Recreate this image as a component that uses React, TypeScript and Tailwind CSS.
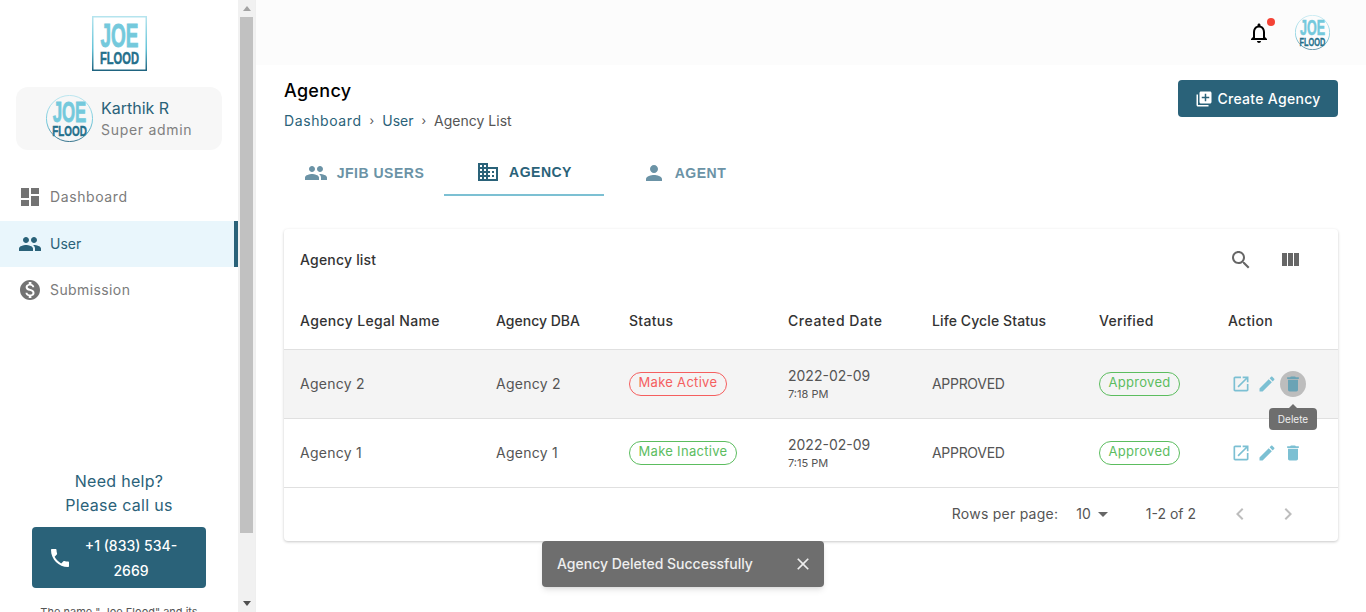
const ICONS = {
  dashboard: 'M3 13h8V3H3v10zm0 8h8v-6H3v6zm10 0h8V11h-8v10zm0-18v6h8V3h-8z',
  people:
    'M16 11c1.66 0 2.99-1.34 2.99-3S17.66 5 16 5c-1.66 0-3 1.34-3 3s1.34 3 3 3zm-8 0c1.66 0 2.99-1.34 2.99-3S9.66 5 8 5C6.34 5 5 6.34 5 8s1.34 3 3 3zm0 2c-2.33 0-7 1.17-7 3.5V19h14v-2.5c0-2.33-4.67-3.5-7-3.5zm8 0c-.29 0-.62.02-.97.05 1.16.84 1.97 1.97 1.97 3.45V19h6v-2.5c0-2.33-4.67-3.5-7-3.5z',
  money:
    'M12 2C6.48 2 2 6.48 2 12s4.48 10 10 10 10-4.48 10-10S17.52 2 12 2zm1.41 16.09V20h-2.67v-1.93c-1.71-.36-3.16-1.46-3.27-3.4h1.96c.1 1.05.82 1.87 2.65 1.87 1.96 0 2.4-.98 2.4-1.59 0-.83-.44-1.61-2.67-2.14-2.48-.6-4.18-1.62-4.18-3.67 0-1.72 1.39-2.84 3.11-3.21V4h2.67v1.95c1.86.45 2.79 1.86 2.85 3.39H14.3c-.05-1.11-.64-1.87-2.22-1.87-1.5 0-2.4.68-2.4 1.64 0 .84.65 1.39 2.67 1.91s4.18 1.39 4.18 3.91c-.01 1.83-1.38 2.83-3.12 3.16z',
  phone:
    'M6.62 10.79c1.44 2.83 3.76 5.14 6.59 6.59l2.2-2.2c.27-.27.67-.36 1.02-.24 1.12.37 2.33.57 3.57.57.55 0 1 .45 1 1V20c0 .55-.45 1-1 1-9.39 0-17-7.61-17-17 0-.55.45-1 1-1h3.5c.55 0 1 .45 1 1 0 1.25.2 2.45.57 3.57.11.35.03.74-.25 1.02l-2.2 2.2z',
  domain:
    'M12 7V3H2v18h20V7H12zM6 19H4v-2h2v2zm0-4H4v-2h2v2zm0-4H4V9h2v2zm0-4H4V5h2v2zm4 12H8v-2h2v2zm0-4H8v-2h2v2zm0-4H8V9h2v2zm0-4H8V5h2v2zm10 12h-8v-2h2v-2h-2v-2h2v-2h-2V9h8v10zm-2-8h-2v2h2v-2zm0 4h-2v2h2v-2z',
  person:
    'M12 12c2.21 0 4-1.79 4-4s-1.79-4-4-4-4 1.79-4 4 1.79 4 4 4zm0 2c-2.67 0-8 1.34-8 4v2h16v-2c0-2.66-5.33-4-8-4z',
  libraryAdd:
    'M4 6H2v14c0 1.1.9 2 2 2h14v-2H4V6zm16-4H8c-1.1 0-2 .9-2 2v12c0 1.1.9 2 2 2h12c1.1 0 2-.9 2-2V4c0-1.1-.9-2-2-2zm-1 9h-4v4h-2v-4H9V9h4V5h2v4h4v2z',
  search:
    'M15.5 14h-.79l-.28-.27C15.41 12.59 16 11.11 16 9.5 16 5.91 13.09 3 9.5 3S3 5.91 3 9.5 5.91 16 9.5 16c1.61 0 3.09-.59 4.23-1.57l.27.28v.79l5 4.99L20.49 19l-4.99-5zm-6 0C7.01 14 5 11.99 5 9.5S7.01 5 9.5 5 14 7.01 14 9.5 11.99 14 9.5 14z',
  columns: 'M10 18h5V5h-5v13zm-6 0h5V5H4v13zM16 5v13h5V5h-5z',
  open: 'M19 19H5V5h7V3H5c-1.11 0-2 .9-2 2v14c0 1.1.89 2 2 2h14c1.1 0 2-.9 2-2v-7h-2v7zM14 3v2h3.59l-9.83 9.83 1.41 1.41L19 6.41V10h2V3h-7z',
  edit: 'M3 17.25V21h3.75L17.81 9.94l-3.75-3.75L3 17.25zM20.71 7.04c.39-.39.39-1.02 0-1.41l-2.34-2.34c-.39-.39-1.02-.39-1.41 0l-1.83 1.83 3.75 3.75 1.83-1.83z',
  trash: 'M6 19c0 1.1.9 2 2 2h8c1.1 0 2-.9 2-2V7H6v12zM19 4h-3.5l-1-1h-5l-1 1H5v2h14V4z',
  close:
    'M19 6.41L17.59 5 12 10.59 6.41 5 5 6.41 10.59 12 5 17.59 6.41 19 12 13.41 17.59 19 19 17.59 13.41 12z',
  chevronLeft: 'M15.41 7.41L14 6l-6 6 6 6 1.41-1.41L10.83 12z',
  chevronRight: 'M10 6L8.59 7.41 13.17 12l-4.58 4.59L10 18l6-6z',
  dropDown: 'M7 10l5 5 5-5z',
  bell: 'M12 22c1.1 0 2-.9 2-2h-4c0 1.1.9 2 2 2zm6-6v-5c0-3.07-1.63-5.64-4.5-6.32V4c0-.83-.67-1.5-1.5-1.5s-1.5.67-1.5 1.5v.68C7.64 5.36 6 7.92 6 11v5l-2 2v1h16v-1l-2-2zm-2 1H8v-6c0-2.48 1.51-4.5 4-4.5s4 2.02 4 4.5v6z',
};

function Icon({ name, className }: { name: keyof typeof ICONS; className: string }) {
  return (
    <svg viewBox="0 0 24 24" fill="currentColor" className={`shrink-0 ${className}`}>
      <path d={ICONS[name]} />
    </svg>
  );
}

function LogoWords({ id }: { id: string }) {
  return (
    <>
      <defs>
        <linearGradient id={`${id}-joe`} x1="0" y1="0" x2="0" y2="1">
          <stop offset="0" stopColor="#a6dfeb" />
          <stop offset="1" stopColor="#5fc1d7" />
        </linearGradient>
        <linearGradient id={`${id}-flood`} x1="0" y1="0" x2="0" y2="1">
          <stop offset="0" stopColor="#2f8aa6" />
          <stop offset="1" stopColor="#1d5f7a" />
        </linearGradient>
        <linearGradient id={`${id}-edge`} x1="0" y1="0" x2="0" y2="1">
          <stop offset="0" stopColor="#b5e4ee" />
          <stop offset="0.6" stopColor="#62c3d8" />
          <stop offset="1" stopColor="#1f6480" />
        </linearGradient>
      </defs>
      <text
        x="27.5"
        y="31"
        textAnchor="middle"
        textLength="38"
        lengthAdjust="spacingAndGlyphs"
        fontFamily="'Liberation Sans', sans-serif"
        fontWeight="700"
        fontSize="33"
        fill="#74c9dc"
        stroke="#74c9dc"
        strokeWidth="0.9"
      >
        JOE
      </text>
      <text
        x="27.5"
        y="47.5"
        textAnchor="middle"
        textLength="39"
        lengthAdjust="spacingAndGlyphs"
        fontFamily="'Liberation Sans', sans-serif"
        fontWeight="700"
        fontSize="16.5"
        fill="#24708c"
        stroke="#24708c"
        strokeWidth="0.5"
      >
        FLOOD
      </text>
    </>
  );
}

function SquareLogo() {
  return (
    <svg viewBox="0 0 55 55" className="h-[55px] w-[55px]">
      <LogoWords id="logo-square" />
      <rect x="0.75" y="0.75" width="53.5" height="53.5" fill="none" stroke="url(#logo-square-edge)" strokeWidth="1.5" />
    </svg>
  );
}

function RoundLogo({ id, className }: { id: string; className: string }) {
  return (
    <svg viewBox="1 1 53 53" className={className}>
      <LogoWords id={id} />
      <circle cx="27.5" cy="27.5" r="26" fill="none" stroke={`url(#${id}-edge)`} strokeWidth="1" />
    </svg>
  );
}

function Chip({ label, tone }: { label: string; tone: 'red' | 'green' }) {
  const toneClass = tone === 'red' ? 'border-[#f55f5f] text-[#f55f5f]' : 'border-[#5cbd5f] text-[#5cbd5f]';
  return (
    <span
      className={`inline-flex h-6 items-center rounded-full border px-[8.5px] pb-[3px] text-[13px] tracking-[0.3px] ${toneClass}`}
    >
      {label}
    </span>
  );
}

const COLUMNS = 'grid grid-cols-[196px_133px_159px_144px_167px_129px_1fr] items-center px-4';

const ROWS = [
  { name: 'Agency 2', status: 'Make Active', tone: 'red' as const, time: '7:18 PM', hover: true },
  { name: 'Agency 1', status: 'Make Inactive', tone: 'green' as const, time: '7:15 PM', hover: false },
];

function Sidebar() {
  return (
    <aside className="flex h-full w-[256px] shrink-0 border-r border-[#efefef]">
      <div className="flex w-[238px] flex-col overflow-hidden">
        <div className="mt-4 flex shrink-0 justify-center">
          <SquareLogo />
        </div>
        <div className="mx-4 mt-4 flex h-[63px] shrink-0 items-center gap-2 rounded-xl bg-[#f7f7f7] pl-[30px]">
          <RoundLogo id="logo-user" className="h-[47px] w-[47px] shrink-0" />
          <div>
            <div className="text-base leading-[21px] text-[#2a6279]">Karthik R</div>
            <div className="text-sm leading-[21px] tracking-[0.7px] text-[#808080]">Super admin</div>
          </div>
        </div>
        <nav className="mt-6 shrink-0">
          <div className="flex h-[47px] items-center gap-2 pb-px pl-[18px] text-sm tracking-[0.6px] text-[#7b7b7b]">
            <Icon name="dashboard" className="h-6 w-6 text-[#737373]" />
            Dashboard
          </div>
          <div className="flex h-[46px] items-center gap-2 border-r-4 border-[#2a6279] bg-[#e9f6fc] pl-[18px] text-sm text-[#2a6279]">
            <Icon name="people" className="h-6 w-6" />
            User
          </div>
          <div className="flex h-[46px] items-center gap-2 pl-[18px] text-sm tracking-[0.4px] text-[#7b7b7b]">
            <Icon name="money" className="h-6 w-6 text-[#737373]" />
            Submission
          </div>
        </nav>
        <div className="mt-[156px] shrink-0 text-center text-base leading-6 tracking-[0.3px] text-[#2a6279]">
          <div>Need help?</div>
          <div>Please call us</div>
        </div>
        <div className="mx-8 mt-[10px] flex h-[61px] shrink-0 items-center rounded bg-[#2a6279] pl-4 pr-4 text-white">
          <Icon name="phone" className="h-6 w-6" />
          <div className="flex-1 text-center text-sm font-medium leading-[25px]">
            +1 (833) 534-
            <br />
            2669
          </div>
        </div>
        <div className="mt-4 shrink-0 text-center text-[11px] leading-4 text-[#555]">The name " Joe Flood" and its</div>
      </div>
      <div className="flex w-[17px] flex-col items-center bg-[#f1f1f1]">
        <div className="flex h-[17px] items-center justify-center">
          <div className="h-0 w-0 border-x-4 border-b-[5px] border-x-transparent border-b-[#a3a3a3]" />
        </div>
        <div className="h-[516px] w-[13px] bg-[#c1c1c1]" />
        <div className="mt-auto flex h-[17px] items-center justify-center">
          <div className="h-0 w-0 border-x-4 border-t-[5px] border-x-transparent border-t-[#505050]" />
        </div>
      </div>
    </aside>
  );
}

function ListCard() {
  return (
    <div className="mt-[33px] rounded bg-white shadow-[0_1px_3px_rgba(0,0,0,0.22)]">
      <div className="flex h-[63px] items-center justify-between pb-0.5 pl-4 pr-9">
        <span className="text-sm font-medium tracking-[0.2px] text-[#333]">Agency list</span>
        <div className="flex items-center gap-[25px] text-[#666]">
          <Icon name="search" className="h-6 w-6" />
          <Icon name="columns" className="h-6 w-6" />
        </div>
      </div>
      <div className={`${COLUMNS} h-[57px] text-sm font-medium text-[#333]`}>
        <div className="tracking-[0.35px]">Agency Legal Name</div>
        <div>Agency DBA</div>
        <div className="tracking-[0.3px]">Status</div>
        <div className="tracking-[0.55px]">Created Date</div>
        <div className="tracking-[0.1px]">Life Cycle Status</div>
        <div className="tracking-[0.3px]">Verified</div>
        <div className="tracking-[0.3px]">Action</div>
      </div>
      {ROWS.map((row) => (
        <div
          key={row.name}
          className={`${COLUMNS} h-[69px] border-t border-[#e0e0e0] text-sm text-[#555] ${row.hover ? 'bg-[#f4f4f4]' : ''}`}
        >
          <div className="tracking-[0.25px]">{row.name}</div>
          <div className="tracking-[0.25px]">{row.name}</div>
          <div>
            <Chip label={row.status} tone={row.tone} />
          </div>
          <div>
            <div className="leading-5">2022-02-09</div>
            <div className="text-[11px] leading-4">{row.time}</div>
          </div>
          <div className="tracking-[-0.3px]">APPROVED</div>
          <div>
            <Chip label="Approved" tone="green" />
          </div>
          <div className="flex items-center gap-1.5 pl-[3px] text-[#7cc0d3]">
            <Icon name="open" className="h-5 w-5" />
            <Icon name="edit" className="h-5 w-5" />
            <div className="relative h-5 w-5">
              {row.hover && <div className="absolute -inset-[3px] rounded-full bg-[#bdbdbd]" />}
              <Icon name="trash" className={`relative h-5 w-5 ${row.hover ? 'text-[#6aa3b5]' : ''}`} />
              {row.hover && (
                <div className="absolute left-1/2 top-[34px] z-10 flex h-[22px] w-12 -translate-x-1/2 items-center justify-center rounded bg-[#6e6e6e] text-[10px] text-[#eee]">
                  <div className="absolute -top-[4px] left-1/2 h-0 w-0 -translate-x-1/2 border-x-4 border-b-4 border-x-transparent border-b-[#6e6e6e]" />
                  Delete
                </div>
              )}
            </div>
          </div>
        </div>
      ))}
      <div className="flex h-[54px] items-center justify-end border-t border-[#e0e0e0] pb-0.5 pr-[38px] text-sm text-[#555]">
        <span className="tracking-[0.25px]">Rows per page:</span>
        <span className="ml-[18px]">10</span>
        <Icon name="dropDown" className="h-6 w-6 text-[#666]" />
        <span className="ml-[31px]">1-2 of 2</span>
        <Icon name="chevronLeft" className="ml-8 h-6 w-6 text-[#bdbdbd]" />
        <Icon name="chevronRight" className="ml-6 h-6 w-6 text-[#bdbdbd]" />
      </div>
    </div>
  );
}

export default function App() {
  return (
    <div className="relative flex h-[612px] overflow-hidden bg-white font-['Inter',sans-serif]">
      <Sidebar />
      <main className="flex min-w-0 flex-1 flex-col">
        <header className="flex h-[65px] shrink-0 items-center justify-end bg-[#fcfcfc] pr-[36px]">
          <div className="relative mr-6">
            <Icon name="bell" className="h-6 w-6 text-black" />
            <div className="absolute -right-[4px] -top-[3px] h-2 w-2 rounded-full bg-[#f44336]" />
          </div>
          <RoundLogo id="logo-top" className="h-[35px] w-[35px]" />
        </header>
        <div className="px-7">
          <div className="flex items-start justify-between pt-[15px]">
            <div className="-mt-px">
              <h1 className="text-lg leading-[24px] font-medium tracking-[0.3px] text-black">Agency</h1>
              <div className="mt-2 flex items-center text-sm leading-5">
                <span className="tracking-[0.6px] text-[#2a6279]">Dashboard</span>
                <span className="mx-2 text-xs text-[#555]">›</span>
                <span className="text-[#2a6279]">User</span>
                <span className="mx-2 text-xs text-[#555]">›</span>
                <span className="text-[#555]">Agency List</span>
              </div>
            </div>
            <button
              type="button"
              className="flex h-[37px] w-40 items-center justify-center gap-1 rounded bg-[#2a6279] text-sm font-medium tracking-[0.3px] text-white"
            >
              <Icon name="libraryAdd" className="h-[18px] w-[18px]" />
              Create Agency
            </button>
          </div>
          <div className="mt-[18px] flex font-['Liberation_Sans',sans-serif] text-sm font-bold tracking-[0.5px]">
            <div className="flex h-[47px] w-40 items-center justify-center gap-[9px] text-[#6b93a6]">
              <Icon name="people" className="h-6 w-6" />
              JFIB USERS
            </div>
            <div className="flex h-[47px] w-40 items-center justify-center gap-[9px] border-b-2 border-[#7cc0d3] text-[#2a6279]">
              <Icon name="domain" className="h-6 w-6" />
              AGENCY
            </div>
            <div className="flex h-[47px] w-40 items-center justify-center gap-[9px] text-[#6b93a6]">
              <Icon name="person" className="h-6 w-6" />
              AGENT
            </div>
          </div>
          <ListCard />
        </div>
      </main>
      <div className="absolute left-[542px] top-[541px] z-20 flex h-[46px] w-[282px] items-center justify-between rounded bg-[#6e6e6e] pl-[15px] pr-[11px] text-sm font-medium text-[#eee] shadow-md">
        Agency Deleted Successfully
        <Icon name="close" className="h-5 w-5" />
      </div>
    </div>
  );
}
